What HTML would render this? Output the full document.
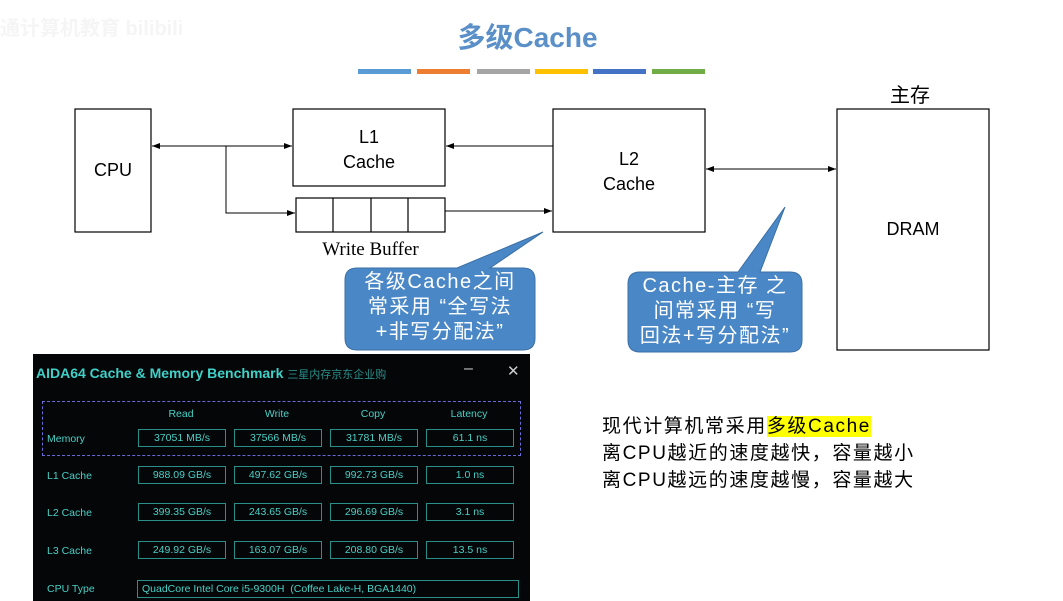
<!DOCTYPE html>
<html><head><meta charset="utf-8"><style>
body{margin:0;width:1063px;height:601px;background:#fff;position:relative;overflow:hidden;font-family:"Liberation Sans","Noto Sans CJK SC",sans-serif}
.a{position:absolute}
.bar{position:absolute;top:69px;height:5px;width:53px}
#aida{position:absolute;left:33px;top:354px;width:497px;height:247px;background:#040608;color:#3fc9c0;font-size:10.5px}
.bx{position:absolute;width:86px;height:16px;border:1px solid #2a8f8a;text-align:center;line-height:16px;color:#49d0c6}
.lb{position:absolute;left:14px;color:#49d0c6}
.hd{position:absolute;top:54px;color:#49d0c6;text-align:center;width:88px}
</style></head><body>
<div class="a" style="left:0;top:12px;font-size:20px;color:#f5f5f5;font-weight:bold">通计算机教育 bilibili</div>
<div class="a" style="left:0;width:1063px;top:16px;text-align:center;font-size:28px;font-weight:bold;color:#5a8fc8"><span style="position:relative;left:-4px">多级Cache</span></div>
<div class="bar" style="left:358px;background:#5b9bd5"></div>
<div class="bar" style="left:417px;background:#ed7d31"></div>
<div class="bar" style="left:477px;background:#a5a5a5"></div>
<div class="bar" style="left:535px;background:#ffc000"></div>
<div class="bar" style="left:593px;background:#4472c4"></div>
<div class="bar" style="left:652px;background:#70ad47"></div>
<svg class="a" style="left:0;top:0" width="1063" height="601">
<defs><marker id="m" markerWidth="8" markerHeight="6" refX="8" refY="3" orient="auto-start-reverse"><path d="M0,0L8,3L0,6z" fill="#000"/></marker></defs>
<g fill="none" stroke="#000" stroke-width="1.2">
<rect x="75" y="109" width="76" height="123"/>
<rect x="293" y="109" width="152" height="77"/>
<rect x="296" y="198" width="149" height="34"/>
<line x1="333" y1="198" x2="333" y2="232"/><line x1="371" y1="198" x2="371" y2="232"/><line x1="408" y1="198" x2="408" y2="232"/>
<rect x="553" y="109" width="152" height="123"/>
<rect x="837" y="109" width="152" height="241"/>
</g>
<g stroke="#000" stroke-width="1" fill="none">
<line x1="152" y1="146" x2="292" y2="146" marker-start="url(#m)" marker-end="url(#m)"/>
<polyline points="226,146 226,213 295,213" marker-end="url(#m)"/>
<line x1="445" y1="211" x2="552" y2="211" marker-end="url(#m)"/>
<line x1="553" y1="146" x2="446" y2="146" marker-end="url(#m)"/>
<line x1="706" y1="169" x2="836" y2="169" marker-start="url(#m)" marker-end="url(#m)"/>
</g>
<path d="M357,268 L457,268 L543,232 L490,268 L523,268 Q535,268 535,280 L535,338 Q535,350 523,350 L357,350 Q345,350 345,338 L345,280 Q345,268 357,268z" fill="#4a87c6" stroke="#3a6fa5"/>
<path d="M640,272 L738,272 L785,207 L760,272 L790,272 Q802,272 802,284 L802,340 Q802,352 790,352 L640,352 Q628,352 628,340 L628,284 Q628,272 640,272z" fill="#4a87c6" stroke="#3a6fa5"/>
</svg>
<div class="a" style="left:293px;width:152px;top:125px;text-align:center;font-size:18px;line-height:25px">L1<br>Cache</div>
<div class="a" style="left:553px;width:152px;top:147px;text-align:center;font-size:18px;line-height:25px">L2<br>Cache</div>
<div class="a" style="left:75px;width:76px;top:160px;text-align:center;font-size:18px">CPU</div>
<div class="a" style="left:837px;width:152px;top:219px;text-align:center;font-size:18px">DRAM</div>
<div class="a" style="left:890px;top:79px;font-size:20px">主存</div>
<div class="a" style="left:296px;width:149px;top:239px;text-align:center;font-size:19px;font-family:'Liberation Serif',serif">Write Buffer</div>
<div class="a" style="left:345px;width:190px;top:270px;text-align:center;font-size:20px;line-height:25px;color:#fff;letter-spacing:1.5px">各级Cache之间<br>常采用 “全写法<br>+非写分配法”</div>
<div class="a" style="left:628px;width:174px;top:274px;text-align:center;font-size:20px;line-height:25px;color:#fff;letter-spacing:1.5px">Cache-主存 之<br>间常采用 “写<br>回法+写分配法”</div>
<div class="a" style="left:602px;top:413px;font-size:19px;line-height:27px;letter-spacing:1.6px">现代计算机常采用<span style="background:#ffff00">多级Cache</span><br>离CPU越近的速度越快，容量越小<br>离CPU越远的速度越慢，容量越大</div>
<div id="aida">
<div class="a" style="left:3px;top:11px;font-size:14px;font-weight:bold;color:#3fd0c8">AIDA64 Cache &amp; Memory Benchmark <span style="font-weight:normal;font-size:11px;color:#2a8f8a">三星内存京东企业购</span></div>
<div class="a" style="left:431px;top:6px;font-size:16px;color:#ccc">–</div>
<div class="a" style="left:474px;top:8px;font-size:15px;color:#ccc">✕</div>
<div class="a" style="left:9px;top:47px;width:477px;height:53px;border:1px dashed #6a6ad8"></div>
<div class="hd" style="left:104px">Read</div><div class="hd" style="left:200px">Write</div><div class="hd" style="left:296px">Copy</div><div class="hd" style="left:392px">Latency</div>
<div class="lb" style="top:79px">Memory</div><div class="lb" style="top:116px">L1 Cache</div><div class="lb" style="top:153px">L2 Cache</div><div class="lb" style="top:191px">L3 Cache</div><div class="lb" style="top:229px">CPU Type</div>
<div class="bx" style="left:105px;top:75px">37051 MB/s</div><div class="bx" style="left:201px;top:75px">37566 MB/s</div><div class="bx" style="left:297px;top:75px">31781 MB/s</div><div class="bx" style="left:393px;top:75px">61.1 ns</div>
<div class="bx" style="left:105px;top:112px">988.09 GB/s</div><div class="bx" style="left:201px;top:112px">497.62 GB/s</div><div class="bx" style="left:297px;top:112px">992.73 GB/s</div><div class="bx" style="left:393px;top:112px">1.0 ns</div>
<div class="bx" style="left:105px;top:149px">399.35 GB/s</div><div class="bx" style="left:201px;top:149px">243.65 GB/s</div><div class="bx" style="left:297px;top:149px">296.69 GB/s</div><div class="bx" style="left:393px;top:149px">3.1 ns</div>
<div class="bx" style="left:105px;top:187px">249.92 GB/s</div><div class="bx" style="left:201px;top:187px">163.07 GB/s</div><div class="bx" style="left:297px;top:187px">208.80 GB/s</div><div class="bx" style="left:393px;top:187px">13.5 ns</div>
<div class="bx" style="left:104px;top:226px;width:376px;text-align:left;padding-left:4px">QuadCore Intel Core i5-9300H &nbsp;(Coffee Lake-H, BGA1440)</div>
</div>
</body></html>
